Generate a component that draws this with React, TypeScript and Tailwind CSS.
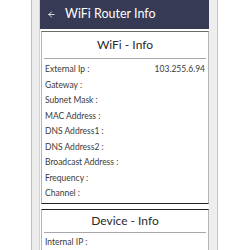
import { ArrowLeft } from 'lucide-react';

const wifiRows: [string, string][] = [
  ['External Ip :', '103.255.6.94'],
  ['Gateway :', ''],
  ['Subnet Mask :', ''],
  ['MAC Address :', ''],
  ['DNS Address1 :', ''],
  ['DNS Address2 :', ''],
  ['Broadcast Address :', ''],
  ['Frequency :', ''],
  ['Channel :', ''],
];

const InfoRow = ({ label, value }: { label: string; value: string }) => (
  <div className="flex h-[15.5px] shrink-0 items-center justify-between pl-[3px] pr-[3px] text-[8.5px] text-[#3a3a3a]">
    <span>{label}</span>
    <span>{value}</span>
  </div>
);

export default function App() {
  return (
    <div className="flex h-[250px] w-[250px] overflow-hidden bg-white font-['Lato',sans-serif]">
      <div className="ml-[31px] flex h-full border-l border-[#bdbdbd] bg-[#ececec] pl-[7px]">
        <div className="flex h-full w-[170px] flex-col border-l border-[#d2d2d2] bg-white">
          <div className="flex h-[29px] shrink-0 items-center bg-[#363a55] text-white">
            <ArrowLeft size={9} strokeWidth={2.2} className="ml-[7px]" />
            <span className="ml-[9px] text-[12.5px] leading-none">WiFi Router Info</span>
          </div>

          <div className="ml-[1px] mt-[2px] flex shrink-0 flex-col border-x border-t border-b border-x-[#b5b5b5] border-t-[#6a6a6a] border-b-[#222]">
            <div className="flex h-[26px] items-center justify-center text-[12px] text-[#2a2a2a]">WiFi - Info</div>
            <div className="mx-[2px] h-px bg-[#a8a8a8]" />
            <div className="flex flex-col pt-[3px] pb-[1.5px]">
              {wifiRows.map(([l, v]) => (
                <InfoRow key={l} label={l} value={v} />
              ))}
            </div>
          </div>

          <div className="ml-[1px] mt-[5px] flex flex-1 flex-col border-x border-t border-x-[#b5b5b5] border-t-[#222]">
            <div className="flex h-[22px] shrink-0 items-center justify-center text-[12px] text-[#2a2a2a]">Device - Info</div>
            <div className="mx-[2px] h-px shrink-0 bg-[#a8a8a8]" />
            <div className="flex flex-col pt-[2px]">
              <InfoRow label="Internal IP :" value="" />
            </div>
          </div>
        </div>
        <div className="h-full w-[9px] border-r border-[#c4c4c4] bg-[#eeeeee]" />
      </div>
    </div>
  );
}
